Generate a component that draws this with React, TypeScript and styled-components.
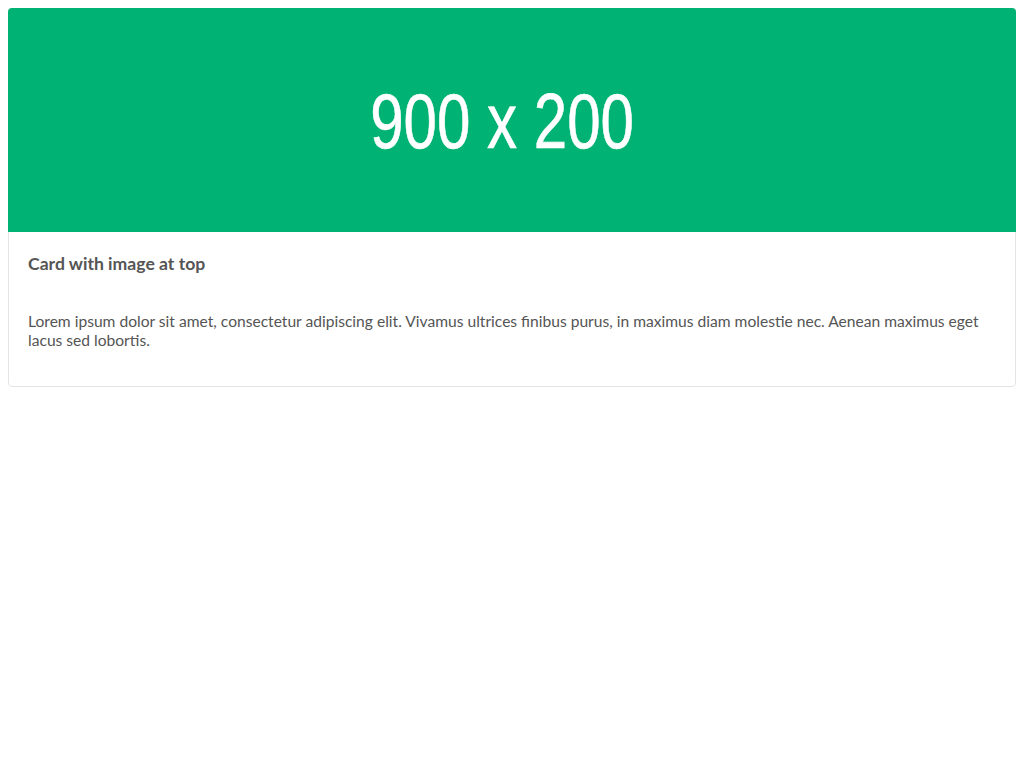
import React from "react";
import styled, { createGlobalStyle } from "styled-components";

const GlobalStyle = createGlobalStyle`
  body {
    margin: 8px;
    background: #fff;
    font-family: Lato, "Open Sans", sans-serif;
  }
`;

const Card = styled.div`
  display: flex;
  flex-direction: column;
  background: #fff;
  border-radius: 4px;
  overflow: hidden;
`;

const Placeholder = styled.div`
  height: 224px;
  background: #00b374;
  display: flex;
  align-items: center;
  justify-content: center;
  padding-right: 19px;
`;

const PlaceholderText = styled.span`
  font-family: "Liberation Sans", Arial, sans-serif;
  font-size: 77px;
  line-height: 1;
  color: #fff;
  -webkit-text-stroke: 0.6px #fff;
  transform: scaleX(0.78);
  white-space: pre;
  margin-top: 2px;
`;

const Body = styled.div`
  padding: 20px 19px 20px;
  border: 1px solid #e4e4e4;
  border-top: none;
  border-radius: 0 0 4px 4px;
`;

const Title = styled.h5`
  margin: 0 0 36px;
  font-size: 17.6px;
  font-weight: 700;
  line-height: 24px;
  color: #555;
`;

const Text = styled.p`
  margin: 0 0 16px;
  font-size: 15.6px;
  line-height: 19px;
  color: #555;
`;

export default function App() {
  return (
    <>
      <GlobalStyle />
      <Card>
        <Placeholder>
          <PlaceholderText>900 x 200</PlaceholderText>
        </Placeholder>
        <Body>
          <Title>Card with image at top</Title>
          <Text>
            Lorem ipsum dolor sit amet, consectetur adipiscing elit. Vivamus ultrices finibus purus, in maximus diam
            molestie nec. Aenean maximus eget lacus sed lobortis.
          </Text>
        </Body>
      </Card>
    </>
  );
}
